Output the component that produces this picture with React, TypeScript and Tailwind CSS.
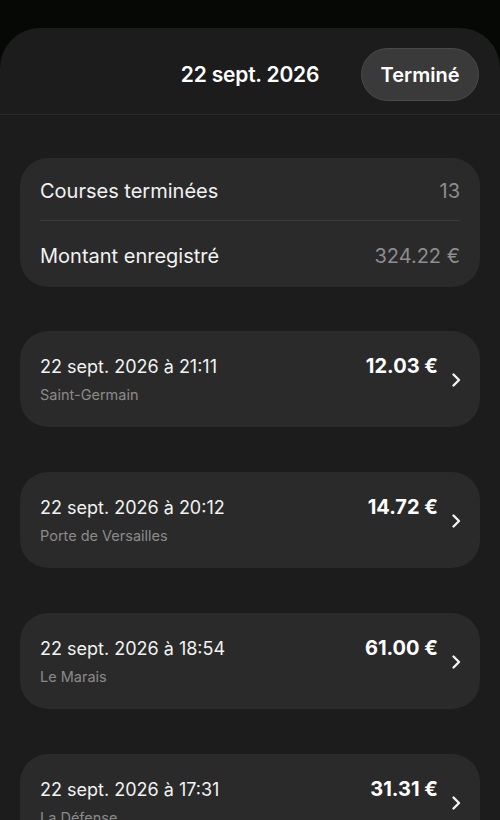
import React from "react";

const rides = [
  { date: "22 sept. 2026 à 21:11", place: "Saint-Germain", amount: "12.03 €" },
  { date: "22 sept. 2026 à 20:12", place: "Porte de Versailles", amount: "14.72 €" },
  { date: "22 sept. 2026 à 18:54", place: "Le Marais", amount: "61.00 €" },
  { date: "22 sept. 2026 à 17:31", place: "La Défense", amount: "31.31 €" },
];

function Chevron() {
  return (
    <svg width="12" height="16" viewBox="0 0 12 16" fill="none" className="shrink-0">
      <path d="M3.5 2.5 L9 8 L3.5 13.5" stroke="#f2f2f2" strokeWidth="2.4" strokeLinecap="round" strokeLinejoin="round" />
    </svg>
  );
}

export default function App() {
  return (
    <div
      className="w-[500px] h-[820px] overflow-hidden bg-[#050805] pt-[28px]"
      style={{ fontFamily: "Inter, 'Noto Sans', sans-serif" }}
    >
      <div className="h-full rounded-t-[40px] bg-[#1c1c1c] overflow-hidden">
        <div className="relative flex items-center justify-center h-[87px] border-b border-[#2a2a2a]">
          <span className="mt-[8px] text-[21px] font-semibold text-white tracking-[-0.2px]">22 sept. 2026</span>
          <button className="absolute right-[21px] top-[20px] h-[53px] w-[118px] rounded-full bg-[#3a3a3a] border border-[#4a4a4a] text-[20px] font-semibold text-white">
            Terminé
          </button>
        </div>

        <div className="px-[20px] pt-[43px] flex flex-col">
          <div className="rounded-[28px] bg-[#2a2a2a] px-[20px]">
            <div className="flex items-center justify-between h-[63px] pt-[4px] border-b border-[#3a3a3a]">
              <span className="text-[20px] text-[#f2f2f2]">Courses terminées</span>
              <span className="text-[20px] text-[#8d8d8d]">13</span>
            </div>
            <div className="flex items-center justify-between h-[66px] pt-[4px]">
              <span className="text-[20px] text-[#f2f2f2]">Montant enregistré</span>
              <span className="text-[20px] text-[#8d8d8d]">324.22 €</span>
            </div>
          </div>

          <div className="flex flex-col gap-[45px] mt-[44px]">
            {rides.map((r) => (
              <div key={r.date} className="rounded-[28px] bg-[#2a2a2a] h-[96px] pl-[20px] pr-[18px] flex items-center">
                <div className="flex-1 flex flex-col gap-[9px] mt-[1px]">
                  <div className="flex items-center justify-between h-[22px]">
                    <span className="text-[18px] text-[#f2f2f2]">{r.date}</span>
                    <span className="text-[20px] font-bold text-white">{r.amount}</span>
                  </div>
                  <span className="text-[14.5px] leading-[18px] text-[#8a8a8a]">{r.place}</span>
                </div>
                <div className="ml-[12px] mt-[2px]">
                  <Chevron />
                </div>
              </div>
            ))}
          </div>
        </div>
      </div>
    </div>
  );
}
